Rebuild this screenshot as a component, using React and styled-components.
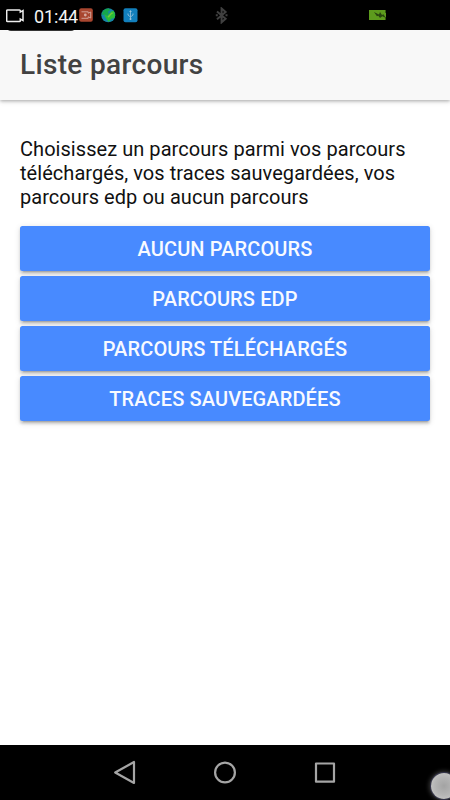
import React from "react";
import styled, { createGlobalStyle } from "styled-components";

const GlobalStyle = createGlobalStyle`
  * { box-sizing: border-box; }
  body { margin: 0; background: #fff; font-family: Roboto, sans-serif; }
`;

const Screen = styled.div`
  position: relative;
  display: flex;
  flex-direction: column;
  width: 450px;
  height: 800px;
  overflow: hidden;
  background: #fff;
`;

const StatusBar = styled.div`
  flex: none;
  display: grid;
  grid-template-columns: 79px 136px 153px 82px;
  height: 30px;
  background: #000;
  svg { display: block; }
`;

const StatusGroup = styled.div`
  display: flex;
  gap: 6.5px;
  padding-top: ${(p) => p.$top}px;
`;

const Recorder = styled.div`
  position: absolute;
  z-index: 2;
  left: 0;
  top: 0;
  display: flex;
  width: 78px;
  height: 31px;
  padding: 9px 0 0 6px;
  gap: 9px;
  svg { flex: none; display: block; }
`;

const RecorderEdge = styled.span`
  position: absolute;
  z-index: 1;
  left: 7px;
  top: 24px;
  width: 68px;
  height: 7px;
  border-radius: 0 0 4px 4px;
  background: #353535;
  clip-path: inset(6px 0 0 0);
`;

const Clock = styled.span`
  color: #f4f4f4;
  font-size: 18px;
  line-height: 16px;
  letter-spacing: -0.15px;
  white-space: nowrap;
`;

const Header = styled.header`
  flex: none;
  display: flex;
  align-items: center;
  height: 70px;
  padding: 0 20px;
  background: #f8f8f8;
  box-shadow: 0 1px 3px rgba(0, 0, 0, 0.24), 0 2px 5px rgba(0, 0, 0, 0.12);
`;

const Title = styled.h1`
  margin: 0;
  color: #424242;
  font-size: 28px;
  font-weight: 500;
  line-height: 34px;
  letter-spacing: 0.34px;
  white-space: nowrap;
`;

const Content = styled.main`
  flex: 1;
  padding: 37px 20px 0;
`;

const Intro = styled.p`
  margin: 0 0 17px;
  color: #111;
  font-size: 20px;
  line-height: 24px;
  letter-spacing: 0.05px;
  white-space: nowrap;
`;

const ButtonList = styled.div`
  display: flex;
  flex-direction: column;
  gap: 5px;
`;

const RouteButton = styled.button`
  height: 45px;
  padding: 1px 0 0;
  border: 0;
  border-radius: 2.5px;
  background: #488aff;
  color: #f8faff;
  font: 500 20px/24px Roboto, sans-serif;
  letter-spacing: 0.12px;
  text-transform: uppercase;
  box-shadow: 0 2.5px 2.5px rgba(0, 0, 0, 0.14), 0 3.75px 1.25px -2.5px rgba(0, 0, 0, 0.2),
    0 1.25px 6px rgba(0, 0, 0, 0.12);
`;

const NavigationBar = styled.nav`
  flex: none;
  display: flex;
  justify-content: center;
  gap: 76px;
  height: 55px;
  padding-top: 15px;
  background: #000;
`;

const TouchBubble = styled.span`
  position: absolute;
  left: 431px;
  top: 773px;
  width: 26px;
  height: 26px;
  border-radius: 50%;
  background: radial-gradient(circle, #a3a3a3 0%, #b5b5b5 50%, #cbcbcb 90%);
  box-shadow: 0 0 0 1px #35354c, 0 0 4px 2px #373737;
`;

const routes = ["Aucun parcours", "Parcours edp", "Parcours téléchargés", "Traces sauvegardées"];

const CameraIcon = () => (
  <svg width="19" height="14" viewBox="0 0 19 14" fill="none" stroke="#eee" strokeWidth="1.5">
    <path d="M1.5.9h12q.8 0 .8.8v1.4l2.7-1.5v10l-2.7-1.5v1.6q0 .8-.8.8h-12q-.8 0-.8-.8v-10q0-.8.8-.8Z" />
  </svg>
);

const RecordAppIcon = () => (
  <svg width="15" height="15" viewBox="0 0 15 15">
    <rect x=".2" y=".2" width="13.6" height="13.6" rx="2" fill="#a9462f" />
    <path d="M2.5 3.8h6.7v1.4l2.5-1.2v6L9.2 8.8v1.5H2.5" fill="none" stroke="#d6aaa0" strokeWidth=".9" />
    <circle cx="6.3" cy="7" r="1.4" fill="#d6aaa0" />
  </svg>
);

const GlobeIcon = () => (
  <svg width="16" height="15" viewBox="0 0 16 15">
    <circle cx="7.3" cy="7.3" r="7" fill="#1686a5" />
    <path d="M2 3Q5 .3 8 .6l1 1.7-2 1.1.7 2.3L6 8 4.2 6.5 1.2 7Q.8 5 2 3Z" fill="#15a74c" />
    <path d="m3 6.5 3.5 1.2 4-4.5 2.4-.3Q15 7.8 13.2 10l-3 .8-2.4 3.3-2.7-3.7Z" fill="#29bd37" />
    <path d="m6.5 8.5 4-4 2.5.2-3 2.1-2.2 3Z" fill="#74c93a" />
  </svg>
);

const UsbIcon = () => (
  <svg width="15" height="15" viewBox="0 0 15 15">
    <rect x=".5" y=".2" width="14" height="14" rx="2" fill="#127fbc" />
    <path d="M7.5 3v9M5 5.5V7l2.5 2L10 7V5.5" fill="none" stroke="#9fc7df" strokeWidth=".8" />
    <path d="m7.5 2 1.3 2H6.2Z" fill="#9fc7df" />
    <circle cx="7.5" cy="11" r="1" fill="#9fc7df" />
  </svg>
);

const BluetoothIcon = () => (
  <svg width="13" height="17" viewBox="0 0 13 17" fill="none" stroke="#404040" strokeWidth="2">
    <path d="m2 4.5 8.6 7.2-4 3.6V1.5l4 3.4L2 12.2" />
    <path d="M.8 8.3h2M10.5 8.3h2" />
  </svg>
);

const BatteryIcon = () => (
  <svg width="18" height="11" viewBox="0 0 18 11">
    <path d="M1 0h17v10H1Z" fill="#5d9b1d" />
    <path d="m6 2 5 2.4L12 2l2 3 1.4-.8L18 8l-3.7-1.8L12 8l-1.7-2.3-1.4.6Z" fill="#294510" />
    <path d="M17 0h1v3h-1ZM17 7h1v3h-1Z" fill="#345610" />
  </svg>
);

const NavIcon = ({ children }) => (
  <svg width="24" height="25" viewBox="0 0 24 25" fill="none" stroke="#a5a5a5" strokeWidth="2.2" strokeLinejoin="round">
    {children}
  </svg>
);

export default function App() {
  return (
    <>
      <GlobalStyle />
      <Screen>
        <StatusBar>
          <span />
          <StatusGroup $top={8}>
            <RecordAppIcon />
            <GlobeIcon />
            <UsbIcon />
          </StatusGroup>
          <StatusGroup $top={7}><BluetoothIcon /></StatusGroup>
          <StatusGroup $top={10}><BatteryIcon /></StatusGroup>
        </StatusBar>
        <RecorderEdge />
        <Recorder>
          <CameraIcon />
          <Clock>01:44</Clock>
        </Recorder>
        <Header><Title>Liste parcours</Title></Header>
        <Content>
          <Intro>
            Choisissez un parcours parmi vos parcours<br />
            téléchargés, vos traces sauvegardées, vos<br />
            parcours edp ou aucun parcours
          </Intro>
          <ButtonList>
            {routes.map((route) => <RouteButton key={route}>{route}</RouteButton>)}
          </ButtonList>
        </Content>
        <NavigationBar>
          <NavIcon><path d="M21 2v21L2.2 12.5Z" /></NavIcon>
          <NavIcon><circle cx="12" cy="12.5" r="9.9" /></NavIcon>
          <NavIcon><rect x="3" y="3.5" width="18" height="18.2" /></NavIcon>
        </NavigationBar>
        <TouchBubble />
      </Screen>
    </>
  );
}
